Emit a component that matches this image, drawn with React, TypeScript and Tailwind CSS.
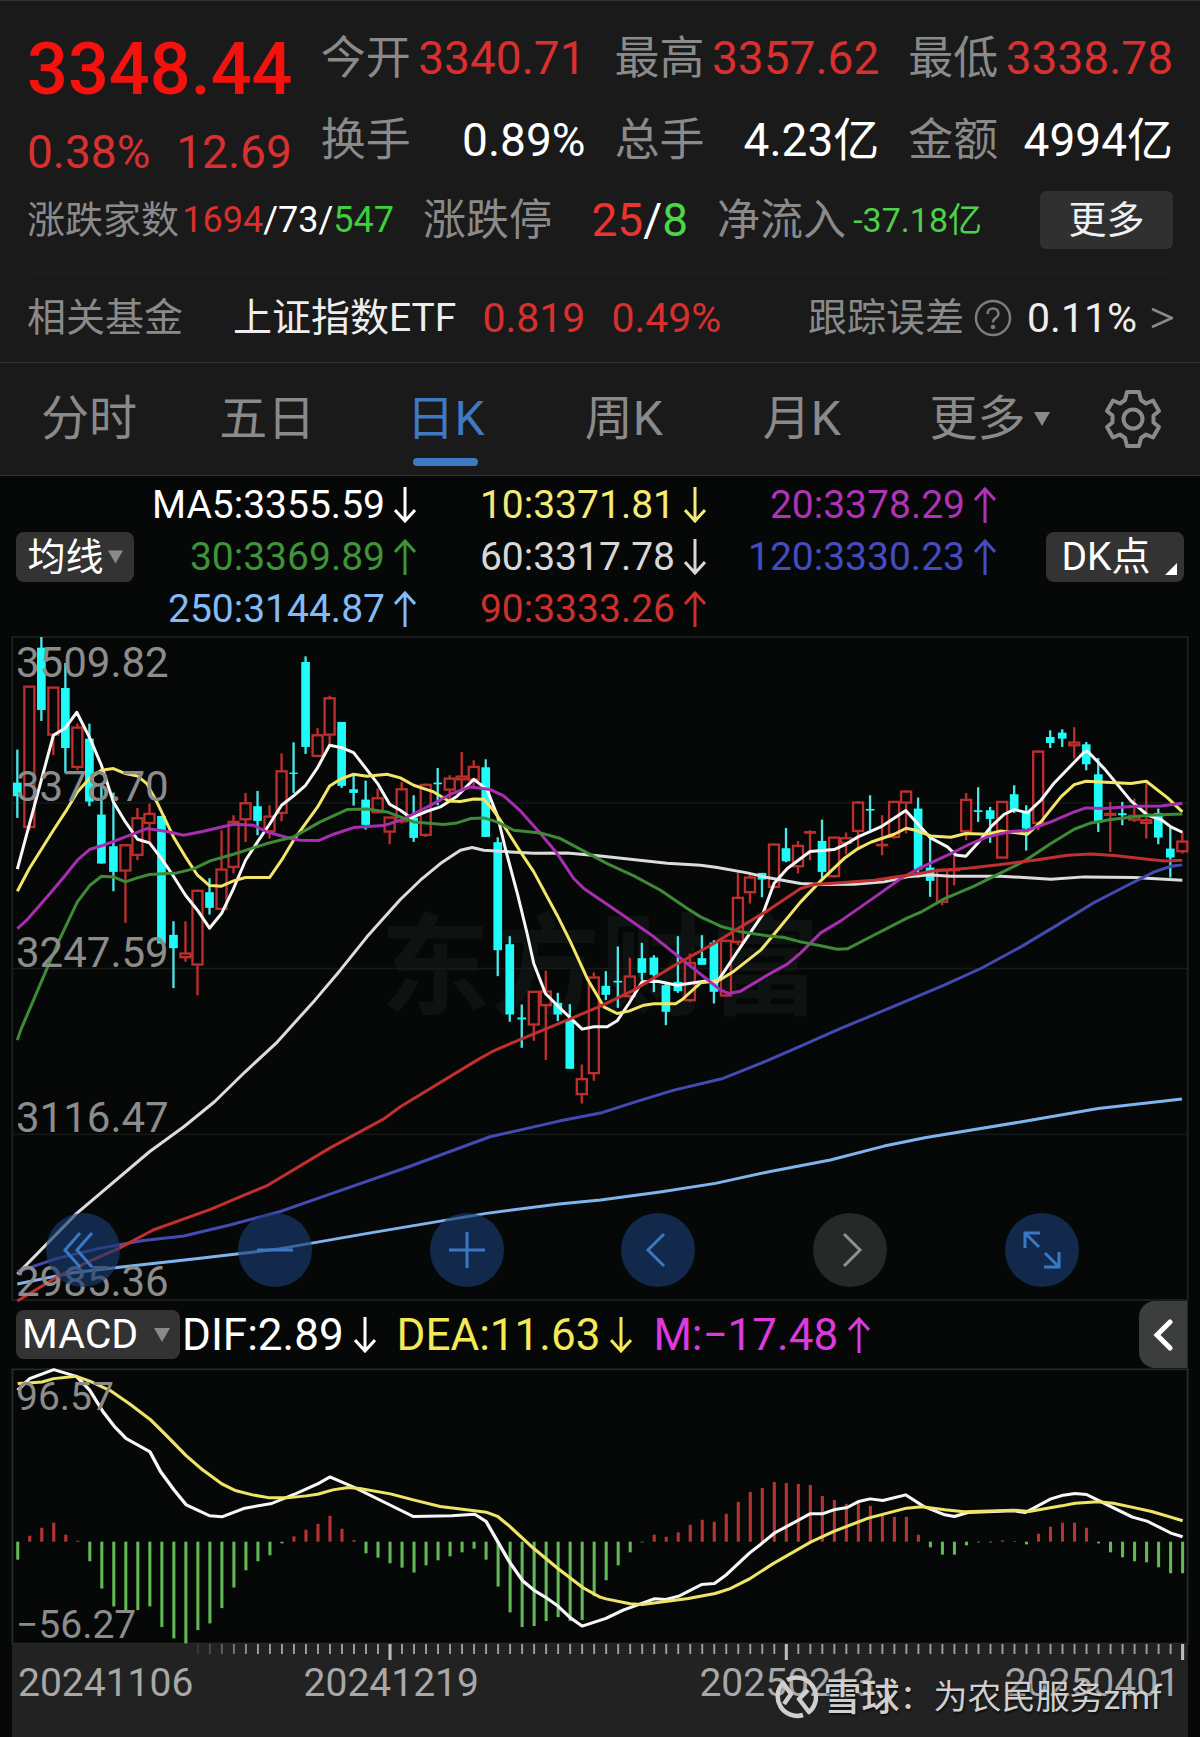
import { useState } from 'react';

type Candle = [up: 0 | 1, high: number, top: number, bottom: number, low: number];

// up flag, high, body top, body bottom, low (chart units, y axis points down)
const candles: Candle[] = [
  [0, 358, 457, 498, 563], [1, 167, 167, 592, 600], [0, 20, 52, 239, 272], [1, 170, 170, 315, 375],
  [0, 98, 173, 353, 428], [1, 280, 290, 412, 420], [0, 280, 325, 514, 528], [0, 470, 553, 700, 700],
  [0, 487, 648, 725, 783], [1, 643, 643, 723, 878], [1, 533, 562, 676, 690], [1, 520, 549, 580, 640],
  [0, 557, 557, 940, 940], [0, 873, 914, 954, 1074], [1, 873, 968, 983, 995], [1, 778, 780, 1005, 1095],
  [0, 744, 786, 833, 853], [1, 600, 716, 838, 838], [1, 555, 573, 712, 730], [1, 488, 517, 569, 635],
  [0, 482, 528, 572, 615], [1, 525, 557, 605, 625], [1, 370, 421, 550, 573], [0, 336, 427, 431, 488],
  [0, 78, 95, 350, 371], [1, 293, 313, 379, 379], [1, 196, 202, 315, 345], [0, 275, 275, 467, 473],
  [0, 437, 477, 488, 526], [0, 451, 508, 584, 598], [1, 475, 502, 548, 548], [1, 560, 560, 606, 642],
  [1, 455, 475, 575, 580], [0, 495, 562, 623, 635], [1, 460, 462, 616, 620], [0, 413, 457, 462, 525],
  [1, 435, 443, 480, 512], [1, 365, 437, 449, 480], [1, 390, 408, 450, 470], [0, 387, 411, 620, 620],
  [0, 621, 636, 960, 1038], [0, 918, 942, 1153, 1175], [0, 1123, 1162, 1168, 1253], [1, 1083, 1083, 1185, 1232],
  [1, 1022, 1082, 1127, 1290], [0, 1088, 1118, 1153, 1173], [0, 1122, 1172, 1316, 1316], [1, 1303, 1345, 1394, 1420],
  [1, 1027, 1040, 1331, 1352], [0, 1023, 1067, 1094, 1110], [0, 949, 1052, 1057, 1133], [1, 983, 1037, 1100, 1105],
  [0, 938, 984, 1028, 1050], [0, 975, 982, 1034, 1086], [0, 1055, 1065, 1145, 1185], [0, 918, 1055, 1083, 1088],
  [1, 970, 997, 1112, 1115], [0, 915, 984, 1004, 1004], [0, 930, 937, 1085, 1120], [1, 928, 930, 1098, 1100],
  [1, 727, 801, 937, 945], [1, 728, 740, 788, 820], [0, 728, 728, 748, 801], [1, 640, 641, 772, 775],
  [0, 593, 654, 693, 696], [1, 632, 645, 710, 730], [1, 600, 604, 608, 690], [0, 568, 632, 725, 750],
  [1, 620, 620, 740, 742], [1, 607, 622, 640, 672], [1, 512, 515, 604, 660], [0, 495, 536, 541, 600],
  [1, 555, 642, 647, 675], [1, 512, 513, 622, 625], [1, 480, 482, 519, 610], [0, 502, 535, 718, 742],
  [0, 620, 712, 752, 800], [1, 715, 717, 817, 825], [1, 670, 715, 722, 765], [1, 488, 507, 605, 630],
  [0, 471, 540, 545, 575], [0, 530, 540, 566, 638], [1, 512, 513, 684, 685], [0, 465, 492, 541, 548],
  [0, 525, 545, 595, 661], [1, 360, 362, 580, 600], [0, 300, 320, 338, 353], [0, 297, 307, 325, 350],
  [1, 291, 335, 347, 385], [0, 335, 342, 402, 420], [0, 383, 432, 577, 605], [1, 515, 549, 556, 665],
  [0, 515, 549, 555, 585], [1, 505, 555, 570, 575], [1, 460, 568, 580, 625], [0, 535, 548, 622, 642],
  [0, 590, 655, 682, 742], [1, 605, 632, 665, 670],
];

const maLines = [
  {
    color: '#dcdcdc',
    points:
      '52,1932 230,1750 448,1565 551,1490 643,1415 735,1325 827,1240 944,1110 1020,1020 1100,920 1200,808 1260,750 1320,700 1380,660 1415,652 1450,660 1530,665 1600,669 1700,668 1800,677 2000,699 2100,705 2150,712 2240,728 2300,742 2400,760 2470,763 2560,762 2650,755 2720,740 2790,734 2850,738 3000,738 3150,747 3250,740 3400,742 3544,750',
  },
  {
    color: '#f7f7f7',
    points:
      '52,717 160,315 196,293 230,246 270,325 304,405 340,515 376,575 412,627 448,638 484,685 520,738 556,795 592,840 628,894 664,850 700,775 736,690 772,635 808,582 844,525 880,497 916,465 952,412 988,345 1024,352 1060,367 1132,460 1168,522 1200,540 1232,563 1280,543 1320,530 1370,498 1420,447 1460,478 1492,560 1516,660 1552,795 1580,910 1600,1000 1635,1090 1680,1135 1745,1197 1780,1190 1820,1190 1850,1172 1885,1120 1925,1055 1970,1053 2030,1065 2110,1053 2150,1055 2220,950 2285,855 2320,760 2360,715 2400,685 2428,664 2500,658 2530,645 2572,620 2640,590 2715,541 2750,580 2788,622 2840,650 2865,674 2895,678 2930,640 2970,590 3010,552 3040,538 3080,548 3120,510 3160,458 3250,365 3260,363 3310,415 3390,512 3440,555 3480,568 3510,590 3544,606',
  },
  {
    color: '#f3e56a',
    points:
      '52,783 88,715 160,600 196,545 232,485 268,445 304,420 340,415 376,430 412,437 440,460 470,515 520,620 556,680 592,735 628,766 664,768 700,752 736,742 808,742 844,690 880,630 952,530 988,467 1024,445 1060,432 1100,438 1160,432 1200,443 1240,465 1300,485 1345,512 1380,514 1420,506 1450,507 1475,535 1500,570 1560,665 1600,725 1670,855 1710,935 1760,1045 1810,1130 1850,1150 1885,1143 1930,1125 1960,1121 2025,1121 2045,1108 2100,1058 2140,1053 2160,1048 2200,1023 2280,960 2330,900 2400,815 2460,752 2530,685 2572,655 2610,636 2680,612 2716,594 2745,600 2790,617 2850,621 2895,610 2960,612 3000,602 3080,612 3120,575 3180,500 3220,463 3255,453 3390,460 3436,453 3500,503 3544,545',
  },
  {
    color: '#a92db0',
    points:
      '52,895 80,870 150,790 196,735 232,690 270,657 310,645 376,620 440,595 500,604 550,615 610,603 700,582 760,585 800,605 860,622 900,630 955,631 1000,612 1060,592 1150,586 1200,570 1232,555 1300,520 1350,492 1410,470 1470,478 1510,497 1560,542 1620,610 1670,670 1720,745 1750,775 1860,850 1960,920 2060,1000 2160,1080 2185,1090 2220,1083 2300,1035 2360,1002 2400,968 2460,908 2520,872 2640,788 2700,745 2760,712 2840,675 2900,645 2960,620 3030,604 3080,600 3150,575 3220,545 3255,533 3310,535 3400,528 3480,527 3544,519',
  },
  {
    color: '#3f8a37',
    points:
      '52,1230 62,1200 175,935 232,815 270,765 304,738 340,740 376,755 412,743 448,733 530,728 580,716 630,692 700,672 800,640 880,620 960,575 1040,538 1100,536 1160,545 1240,575 1330,583 1370,578 1410,565 1450,563 1490,575 1540,600 1620,608 1680,625 1760,668 1820,700 1900,737 1980,780 2060,835 2100,860 2160,888 2220,905 2300,917 2350,922 2400,935 2460,947 2510,957 2540,956 2600,925 2720,863 2760,846 2830,806 2920,768 3000,728 3070,693 3150,640 3220,597 3270,578 3330,568 3440,555 3544,551',
  },
  {
    color: '#444ab4',
    points:
      '52,1925 172,1885 298,1855 425,1832 551,1818 689,1785 838,1745 987,1693 1217,1613 1469,1520 1676,1473 1800,1449 1900,1417 2020,1380 2167,1345 2280,1300 2400,1248 2520,1195 2700,1120 2830,1065 2940,1015 3060,950 3160,890 3280,817 3380,765 3460,725 3510,708 3544,704',
  },
  {
    color: '#7fb5ee',
    points:
      '52,1962 207,1930 344,1913 574,1888 827,1858 1102,1810 1458,1750 1676,1722 1800,1710 1984,1685 2144,1660 2305,1625 2489,1590 2650,1548 2776,1522 3063,1475 3292,1435 3543,1407',
  },
  {
    color: '#c22f2f',
    points:
      '52,2013 172,1940 276,1890 356,1855 459,1800 631,1738 804,1665 987,1555 1148,1468 1200,1430 1430,1290 1480,1262 1560,1228 1700,1170 1800,1128 1900,1080 2030,1001 2140,940 2240,878 2300,842 2400,775 2440,763 2530,757 2620,750 2720,735 2800,722 2900,714 3000,703 3100,690 3200,675 3270,671 3340,676 3440,687 3490,692 3544,690',
  },
];

const macdBars = [
  -54, 18, 42, 57, 21, 3, -59, -141, -195, -206, -206, -195, -257, -291, -306, -266, -246, -200, -138, -86,
  -59, -41, -5, 16, 36, 54, 78, 39, 5, -35, -48, -65, -78, -93, -71, -56, -44, -32, -21, -54,
  -135, -213, -257, -254, -239, -227, -239, -236, -164, -116, -71, -32, -2, 21, 15, 28, 51, 66, 60, 84,
  120, 150, 162, 180, 177, 174, 171, 138, 126, 114, 123, 108, 81, 75, 75, 21, -17, -39, -39, -11,
  -2, -2, 4, 2, -8, 24, 45, 57, 57, 42, -5, -32, -47, -59, -62, -77, -95, -95,
];

const difPoints =
  '47,90 78,55 141,28 200,48 235,90 270,155 300,200 330,235 392,275 420,335 455,390 487,435 548,468 580,471 640,445 710,431 770,403 830,372 862,351 925,382 1080,470 1180,468 1240,463 1270,485 1330,605 1365,663 1395,692 1425,713 1458,740 1490,775 1521,800 1583,777 1628,752 1709,718 1740,720 1773,710 1833,675 1866,672 1898,645 1958,580 1988,553 2023,520 2083,483 2116,462 2148,462 2178,450 2213,443 2243,425 2273,417 2306,422 2366,405 2413,440 2468,465 2493,470 2528,458 2648,453 2678,458 2708,440 2743,418 2773,407 2808,401 2838,404 2898,438 2958,472 2998,485 3058,520 3089,531';
const deaPoints =
  '47,70 75,68 110,65 141,55 200,48 240,65 290,92 340,132 395,180 430,220 487,287 530,330 580,372 615,392 660,405 705,414 750,414 800,408 830,403 870,390 910,383 940,386 1020,402 1080,420 1150,440 1240,453 1270,457 1300,470 1330,498 1395,567 1458,627 1521,683 1568,713 1583,718 1646,733 1678,735 1738,726 1798,717 1868,702 1908,687 1958,658 2018,613 2118,547 2178,515 2268,475 2308,463 2368,445 2408,441 2468,450 2518,456 2648,451 2688,455 2773,438 2808,430 2868,426 2908,430 2968,445 3008,455 3058,472 3089,483';

const quotes = [
  { label: '今开', value: '3340.71', className: 'text-[#d8302e]' },
  { label: '最高', value: '3357.62', className: 'text-[#d8302e]' },
  { label: '最低', value: '3338.78', className: 'text-[#d8302e]' },
  { label: '换手', value: '0.89%', className: 'text-white' },
  { label: '总手', value: '4.23亿', className: 'text-white' },
  { label: '金额', value: '4994亿', className: 'text-white' },
];

const averages = [
  { text: 'MA5:3355.59', up: false, className: 'text-white' },
  { text: '10:3371.81', up: false, className: 'text-[#f5e977]' },
  { text: '20:3378.29', up: true, className: 'text-[#b032b6]' },
  { text: '30:3369.89', up: true, className: 'text-[#3f9439]' },
  { text: '60:3317.78', up: false, className: 'text-[#d8d8d8]' },
  { text: '120:3330.23', up: true, className: 'text-[#444cc0]' },
  { text: '250:3144.87', up: true, className: 'text-[#84bbf5]' },
  { text: '90:3333.26', up: true, className: 'text-[#cb302e]' },
];

const tabs = ['分时', '五日', '日K', '周K', '月K'];

const controls = [
  { name: '最早', d: 'M-3 -17 L-18 0 L-3 17 M9 -17 L-6 0 L9 17' },
  { name: '缩小', d: 'M-18 0 H18' },
  { name: '放大', d: 'M-18 0 H18 M0 -18 V18' },
  { name: '左移', d: 'M6 -16 L-10 0 L6 16' },
  { name: '右移', d: 'M-6 -16 L10 0 L-6 16', disabled: true },
  { name: '全屏', d: 'M-3 -3 L-17 -17 M-17 -2 V-17 H-2 M3 3 L17 17 M17 2 V17 H2' },
];

function Arrow({ up }: { up: boolean }) {
  return (
    <svg viewBox="0 0 22 36" className="h-[36px] w-[22px] shrink-0" fill="none" stroke="currentColor" strokeWidth="3">
      <path d={up ? 'M11 36 V2 M1 13 L11 2 L21 13' : 'M11 0 V34 M1 23 L11 34 L21 23'} />
    </svg>
  );
}

function Caret({ className }: { className: string }) {
  return (
    <svg viewBox="0 0 16 14" className={className} fill="currentColor">
      <path d="M0 0 H16 L8 14 Z" />
    </svg>
  );
}

function Header() {
  return (
    <header className="border-t border-[#333] bg-[#1a1a1a] px-[27px] pt-4">
      <div className="grid grid-cols-4 gap-x-[29px]">
        <div className="row-span-2 text-[#d8302e]">
          <div className="flex h-[106px] items-center text-[72px] leading-none font-medium text-[#f4120e]">3348.44</div>
          <div className="flex h-[58px] items-center justify-between text-[46px] leading-none">
            <span>0.38%</span>
            <span>12.69</span>
          </div>
        </div>
        {quotes.map(q => (
          <div key={q.label} className="flex h-[82px] items-center justify-between text-[46px] leading-none whitespace-nowrap">
            <span className="text-[45px] text-[#8a8a8a]">{q.label}</span>
            <span className={q.className}>{q.value}</span>
          </div>
        ))}
      </div>

      <div className="flex h-[78px] items-center leading-none whitespace-nowrap">
        <div className="flex w-[367px] items-center justify-between text-[36px]">
          <span className="text-[38px] text-[#8a8a8a]">涨跌家数</span>
          <span className="text-white">
            <span className="text-[#d8302e]">1694</span>/73/<span className="text-[#3fcf3c]">547</span>
          </span>
        </div>
        <div className="ml-[29px] flex w-[265px] items-center justify-between">
          <span className="text-[43px] text-[#8a8a8a]">涨跌停</span>
          <span className="text-[46px] text-white">
            <span className="text-[#e8352f]">25</span>/<span className="text-[#4ed649]">8</span>
          </span>
        </div>
        <div className="ml-[29px] flex w-[265px] items-center justify-between">
          <span className="text-[43px] text-[#8a8a8a]">净流入</span>
          <span className="text-[34px] text-[#4fd04b]">-37.18亿</span>
        </div>
        <button type="button" className="ml-auto h-[58px] w-[133px] rounded-md bg-[#303030] text-[38px] text-[#f0f0f0]">更多</button>
      </div>

      <a href="#etf" className="mt-[14px] flex h-[89px] items-center border-t border-[#202020] text-[39px] leading-none whitespace-nowrap">
        <span className="text-[#8a8a8a]">相关基金</span>
        <span className="ml-[50px] text-[#eee]">上证指数ETF</span>
        <span className="ml-[26px] text-[41px] text-[#d8302e]">0.819</span>
        <span className="ml-[26px] text-[41px] text-[#d8302e]">0.49%</span>
        <span className="ml-auto text-[#8a8a8a]">跟踪误差</span>
        <svg viewBox="0 0 38 38" className="ml-[10px] h-[38px] w-[38px] text-[#7c7c7c]" fill="none" stroke="currentColor" strokeWidth="2.5">
          <circle cx="19" cy="19" r="17" />
          <path d="M13.500 15 C13.500 7.500 24.500 7.500 24.500 15 C24.500 19 19 18.500 19 23.500" />
          <circle cx="19" cy="28" r="1" fill="currentColor" />
        </svg>
        <span className="ml-[15px] text-[41px] text-[#eee]">0.11%</span>
        <svg viewBox="0 0 22 22" className="ml-[14px] h-[22px] w-[22px] text-[#8a8a8a]" fill="none" stroke="currentColor" strokeWidth="2.5">
          <path d="M1 2 L21 11 L1 20" />
        </svg>
      </a>
    </header>
  );
}

function PeriodTabs() {
  const [active, setActive] = useState('日K');
  return (
    <nav className="flex h-[114px] items-stretch border-t border-b border-[#333] bg-[#1a1a1a] pr-[38px] text-[48px] leading-none whitespace-nowrap text-[#8a8a8a]">
      {tabs.map(tab => (
        <button
          key={tab}
          type="button"
          onClick={() => setActive(tab)}
          className={tab === active ? 'relative flex-1 text-[#3f79c4]' : 'relative flex-1'}
        >
          {tab}
          {tab === active && <span className="absolute inset-x-0 bottom-[9px] mx-auto h-2 w-[65px] rounded-full bg-[#3f79c4]" />}
        </button>
      ))}
      <button type="button" className="flex w-[185px] items-center justify-center gap-2 pl-3">
        更多
        <Caret className="h-[14px] w-4" />
      </button>
      <button type="button" aria-label="设置" className="ml-[28px] flex items-center">
        <svg viewBox="-29 -29 58 58" className="h-[58px] w-[58px]" fill="none" stroke="currentColor" strokeWidth="4" strokeLinejoin="round">
          <path d="M-6 -27 H6 L8 -19 L13 -15.500 L20 -18.500 L26 -8 L20.500 -3.500 V3.500 L26 8 L20 18.500 L13 15.500 L8 19 L6 27 H-6 L-8 19 L-13 15.500 L-20 18.500 L-26 8 L-20.500 3.500 V-3.500 L-26 -8 L-20 -18.500 L-13 -15.500 L-8 -19 Z" />
          <circle r="9.500" />
        </svg>
      </button>
    </nav>
  );
}

function AverageLegend() {
  return (
    <section className="flex items-center px-4 pt-[3px] pb-[2px] leading-none">
      <button type="button" className="flex h-[50px] w-[118px] items-center justify-center gap-1 rounded-lg bg-[#333] text-[38px] whitespace-nowrap text-white">
        均线
        <Caret className="h-[14px] w-[15px] text-[#8a8a8a]" />
      </button>
      <div className="mr-[50px] grid flex-1 grid-cols-[282fr_290fr_290fr]">
        {averages.map(a => (
          <div key={a.text} className={`flex h-[52px] items-center justify-end gap-[9px] text-[39px] ${a.className}`}>
            {a.text}
            <Arrow up={a.up} />
          </div>
        ))}
      </div>
      <button type="button" className="relative h-[50px] w-[138px] rounded-lg bg-[#333] pr-[18px] text-[39px] text-white">
        DK点
        <svg viewBox="0 0 12 12" className="absolute right-[7px] bottom-[7px] h-3 w-3" fill="currentColor">
          <path d="M12 0 V12 H0 Z" />
        </svg>
      </button>
    </section>
  );
}

function PriceChart() {
  return (
    <section className="relative mx-3 h-[663px] text-[#8c8c8c]">
      <div className="absolute inset-0 flex items-center justify-center text-[110px] leading-none font-bold text-[#0e1211]">东方财富</div>
      <svg viewBox="36 20 3525 1990" preserveAspectRatio="none" className="absolute inset-0 h-full w-full overflow-visible" fill="none">
        <path d="M36 518 H3561 M36 1015 H3561 M36 1513 H3561" stroke="#161a19" strokeWidth="4" />
        <path d="M37 20 H3560 V2010 H37 Z" stroke="#202323" strokeWidth="5" />
        {candles.map(([up, high, top, bottom, low], i) => {
          const x = 52 + 36 * i;
          return up ? (
            <g key={i} stroke="#bd2f2e" strokeWidth="7">
              <path d={`M${x} ${high} V${top} M${x} ${bottom} V${low}`} />
              <rect x={x - 15} y={top + 2} width={30} height={Math.max(bottom - top - 4, 1)} />
            </g>
          ) : (
            <g key={i}>
              <path d={`M${x} ${high} V${low}`} stroke="#4be6e8" strokeWidth="7" />
              <rect x={x - 13} y={top} width={26} height={bottom - top} fill="#1ffbf8" />
            </g>
          );
        })}
        {maLines.map(line => (
          <polyline key={line.color} points={line.points} stroke={line.color} strokeWidth="9" strokeLinejoin="round" />
        ))}
      </svg>
      <div className="absolute inset-0 grid grid-rows-4 pl-1 text-[42px] leading-8">
        <div className="flex flex-col justify-between pt-[10px]">
          <span>3509.82</span>
          <span>3378.70</span>
        </div>
        <div className="flex items-end">3247.59</div>
        <div className="flex items-end">3116.47</div>
        <div className="flex items-end pb-[2px]">2985.36</div>
      </div>
      <div className="absolute inset-x-0 bottom-[13px] flex justify-between pr-[109px] pl-[34px]">
        {controls.map(c => (
          <button
            key={c.name}
            type="button"
            aria-label={c.name}
            disabled={c.disabled}
            className={
              c.disabled
                ? 'h-[74px] w-[74px] rounded-full bg-[#272929] text-[#8f9090]'
                : 'h-[74px] w-[74px] rounded-full bg-[#1a3c72]/65 text-[#3a78c6]'
            }
          >
            <svg viewBox="-37 -37 74 74" fill="none" stroke="currentColor" strokeWidth="3">
              <path d={c.d} />
            </svg>
          </button>
        ))}
      </div>
    </section>
  );
}

function MacdLegend() {
  return (
    <section className="mx-3 flex h-[69px] items-center border-r border-[#262929] pl-1 text-[44px] leading-none whitespace-nowrap">
      <button type="button" className="flex h-[49px] w-[164px] items-center justify-between rounded-lg bg-[#333] pr-[10px] pl-[6px] text-[41px] text-white">
        MACD
        <Caret className="h-[14px] w-4 text-[#8a8a8a]" />
      </button>
      <span className="ml-[2px] flex items-center gap-[10px] text-white">
        DIF:2.89
        <Arrow up={false} />
      </span>
      <span className="ml-[21px] flex items-center gap-[10px] text-[#f5e956]">
        DEA:11.63
        <Arrow up={false} />
      </span>
      <span className="ml-[21px] flex items-center gap-[10px] text-[#dd3adb]">
        M:−17.48
        <Arrow up />
      </span>
      <button type="button" aria-label="展开" className="ml-auto flex h-[67px] w-12 items-center justify-center rounded-l-2xl bg-[#3c3d3d] text-white">
        <svg viewBox="0 0 20 32" className="h-8 w-5" fill="none" stroke="currentColor" strokeWidth="5" strokeLinecap="round">
          <path d="M17 3 L4 16 L17 29" />
        </svg>
      </button>
    </section>
  );
}

function MacdChart() {
  return (
    <section className="relative mx-3 h-[275px] text-[#8c8c8c]">
      <svg viewBox="32 26 3071 828" preserveAspectRatio="none" className="absolute inset-0 h-full w-full overflow-visible" fill="none">
        <path d="M33 27 H3102 V853 H33 Z" stroke="#262929" strokeWidth="5" />
        {macdBars.map((v, i) => (
          <path key={i} d={`M${47 + 31.36 * i} 546 v${-v}`} stroke={v > 0 ? '#b83434' : '#62b956'} strokeWidth="8" />
        ))}
        <polyline points={difPoints} stroke="#f7f7f7" strokeWidth="9" strokeLinejoin="round" />
        <polyline points={deaPoints} stroke="#f0e468" strokeWidth="9" strokeLinejoin="round" />
      </svg>
      <div className="absolute inset-0 flex flex-col justify-between pt-[12px] pb-[3px] pl-1 text-[39px] leading-8">
        <span>96.57</span>
        <span>−56.27</span>
      </div>
    </section>
  );
}

function DateAxis() {
  return (
    <footer className="relative mx-3 min-h-[90px] flex-1 bg-[#222]">
      <svg viewBox="32 0 3071 48" preserveAspectRatio="none" className="block h-4 w-full overflow-visible">
        {macdBars.map((_, i) => {
          const major = i === 31 || i === 64 || i === 97;
          return (
            <path
              key={i}
              d={`M${47 + 31.36 * i} 0 V${major ? 48 : 30}`}
              stroke={major ? '#bdbdbd' : '#a0a0a0'}
              strokeWidth={major ? 8 : 5}
              opacity={Math.min(1, Math.max(0, (i - 14) / 6))}
            />
          );
        })}
      </svg>
      <div className="grid grid-cols-[180fr_396fr_396fr_203fr] pt-[1px] text-[39px] leading-[44px] text-[#a8a8a8]">
        <span className="pl-[6px]">20241106</span>
        <span className="text-center">20241219</span>
        <span className="text-center">20250213</span>
        <span className="pr-[8px] text-right">20250401</span>
      </div>
      <div className="absolute right-[26px] bottom-[18px] flex items-center text-[34px] leading-none whitespace-nowrap text-[#cfcfcf] [text-shadow:1px_2px_2px_#0009]">
        <svg viewBox="0 0 44 44" className="mr-[5px] h-[44px] w-[44px]" fill="none" stroke="currentColor" strokeWidth="4.500" strokeLinejoin="round">
          <path d="M29 40 A19.500 19.500 0 0 1 9 8 L17 19 L10 29" />
          <path d="M13 5 A19.500 19.500 0 0 1 35 37 L25 24 L34 15" />
        </svg>
        <span className="text-[38px] font-medium">雪球</span>
        <span>：为农民服务zmf</span>
      </div>
    </footer>
  );
}

export default function App() {
  return (
    <div className="flex min-h-screen flex-col bg-[#050807] [font-family:Roboto,'Noto_Sans_CJK_SC',sans-serif]">
      <Header />
      <PeriodTabs />
      <AverageLegend />
      <PriceChart />
      <MacdLegend />
      <MacdChart />
      <DateAxis />
    </div>
  );
}
